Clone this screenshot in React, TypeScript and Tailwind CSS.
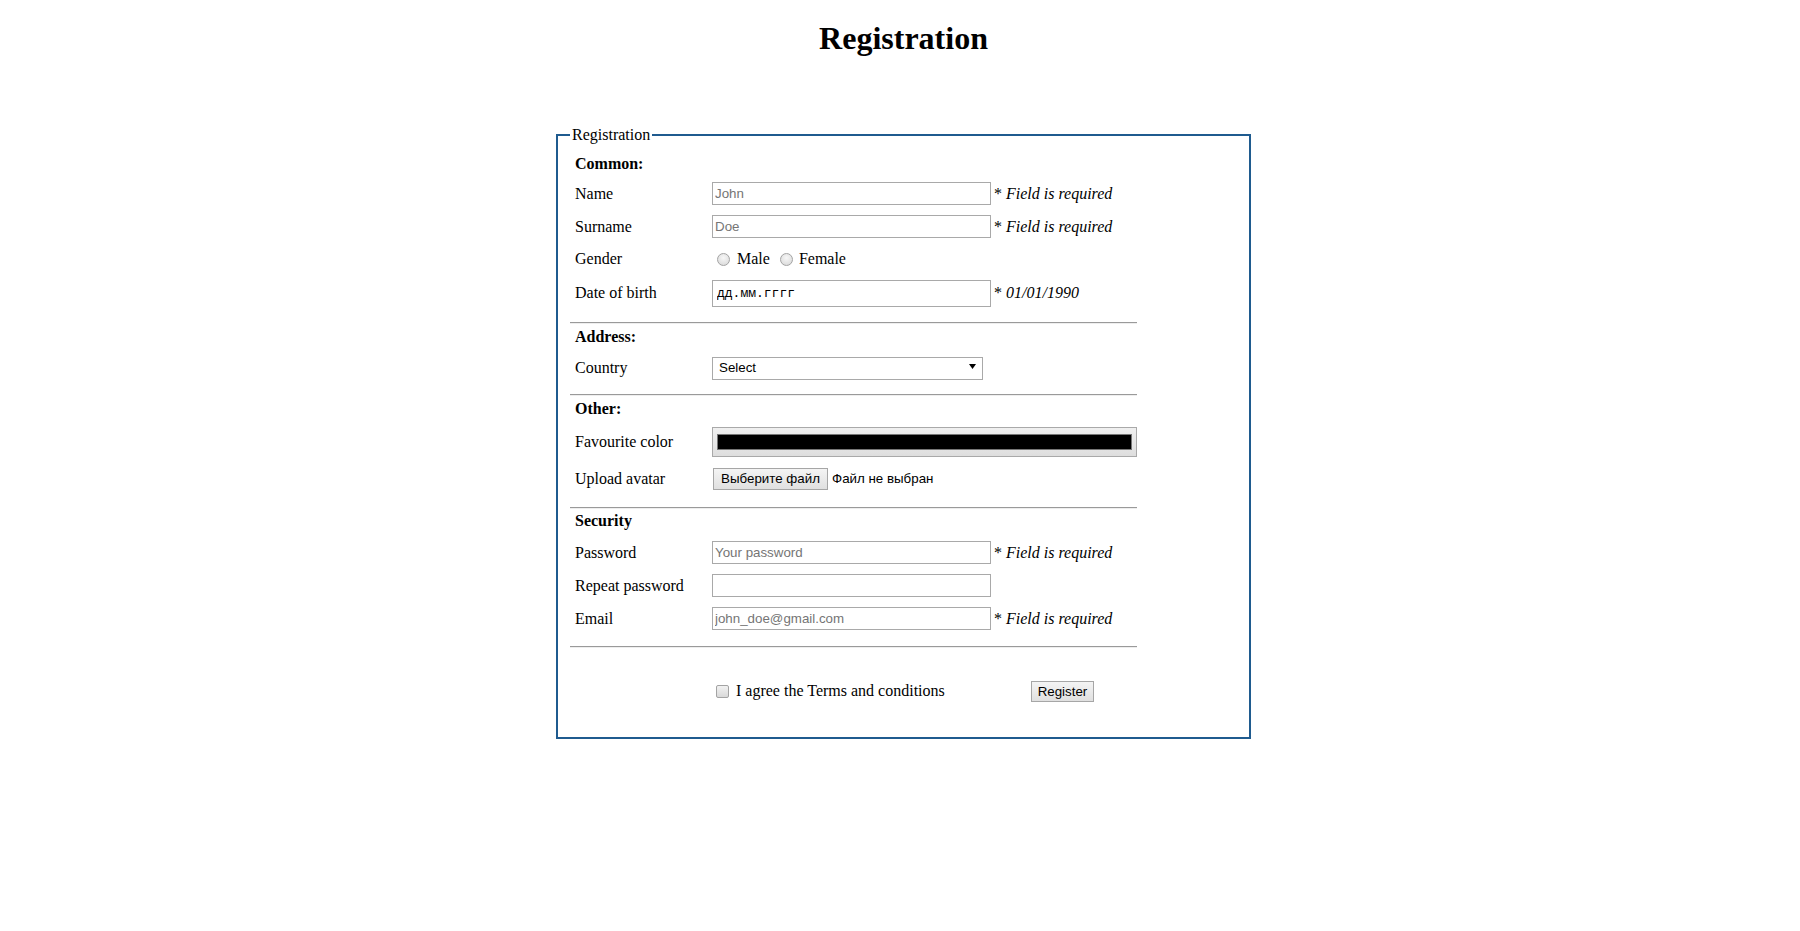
const serif = "font-['Liberation_Serif','Times_New_Roman',serif]";

function Field({ label, className, children }: { label: string; className: string; children?: React.ReactNode }) {
	return (
		<div className={`flex items-center ${className}`}>
			<div className="w-[142px] shrink-0 pl-[5px] leading-[18px]">{label}</div>
			{children}
		</div>
	);
}

function TextInput({ placeholder, type = "text" }: { placeholder?: string; type?: string }) {
	return (
		<input
			type={type}
			placeholder={placeholder}
			className="w-[279px] h-[23px] border border-[#a9a9a9] bg-white px-[2px] text-[13.33px] font-['Liberation_Sans',Arial,sans-serif] text-black placeholder:text-[#757575] outline-none"
		/>
	);
}

function Required({ text = "Field is required" }: { text?: string }) {
	return (
		<span className="ml-[3px] leading-[18px] whitespace-nowrap">
			* <i>{text}</i>
		</span>
	);
}

function Heading({ text, className }: { text: string; className: string }) {
	return <div className={`h-[18px] pl-[5px] leading-[18px] font-bold ${className}`}>{text}</div>;
}

function Rule({ className }: { className: string }) {
	return <hr className={`h-0 border-t border-t-[#9a9a9a] border-b border-b-[#eeeeee] ${className}`} />;
}

export default function App() {
	return (
		<div className={`min-h-[931px] bg-white text-black text-[16px] pl-[7px] ${serif}`}>
			<h1 className="pt-[20px] text-center text-[32px] leading-[37px] font-bold">Registration</h1>
			<div className="flex justify-center mt-[69px]">
				<fieldset className="w-[695px] border-2 border-[#1f5b8f] px-[12px] pb-[34px]">
					<legend className="px-[2px] leading-[18px]">Registration</legend>
					<div className="w-[567px]">
						<Heading text="Common:" className="mt-[11px]" />
						<Field label="Name" className="mt-[4px] h-[33px]">
							<TextInput placeholder="John" />
							<Required />
						</Field>
						<Field label="Surname" className="h-[33px]">
							<TextInput placeholder="Doe" />
							<Required />
						</Field>
						<Field label="Gender" className="h-[32px]">
							<label className="flex items-center leading-[18px]">
								<input
									type="radio"
									name="gender"
									className="appearance-none ml-[5px] mt-[1px] w-[13px] h-[13px] rounded-full border border-[#a3a3a3] bg-[radial-gradient(circle_at_50%_35%,#f7f7f7,#d6d6d6)]"
								/>
								<span className="ml-[7px]">Male</span>
							</label>
							<label className="flex items-center leading-[18px]">
								<input
									type="radio"
									name="gender"
									className="appearance-none ml-[10px] mt-[1px] w-[13px] h-[13px] rounded-full border border-[#a3a3a3] bg-[radial-gradient(circle_at_50%_35%,#f7f7f7,#d6d6d6)]"
								/>
								<span className="ml-[6px]">Female</span>
							</label>
						</Field>
						<Field label="Date of birth" className="h-[36px]">
							<input
								type="text"
								readOnly
								defaultValue="дд.мм.гггг"
								className="w-[279px] h-[27px] border border-[#a9a9a9] bg-white pl-[4px] text-[13px] font-['Liberation_Mono','DejaVu_Sans_Mono',monospace] text-black outline-none"
							/>
							<Required text="01/01/1990" />
						</Field>
						<Rule className="mt-[11px]" />

						<Heading text="Address:" className="mt-[4px]" />
						<Field label="Country" className="mt-[5px] h-[33px]">
							<div className="relative">
								<select className="appearance-none w-[271px] h-[23px] border border-[#a9a9a9] bg-white pl-[6px] text-[13.33px] font-['Liberation_Sans',Arial,sans-serif] text-black outline-none">
									<option>Select</option>
									<option>Ukraine</option>
									<option>Poland</option>
									<option>USA</option>
								</select>
								<svg className="pointer-events-none absolute right-[7px] top-[9px]" width="7" height="5" viewBox="0 0 7 5">
									<polygon points="0,0 7,0 3.5,5" fill="#000" />
								</svg>
							</div>
						</Field>
						<Rule className="mt-[10px]" />

						<Heading text="Other:" className="mt-[4px]" />
						<Field label="Favourite color" className="mt-[6px] h-[36px]">
							<div className="w-[426px] h-[30px] border border-[#a9a9a9] bg-linear-to-b from-[#f0f0f0] to-[#dedede] px-[4px] py-[6px]">
								<div className="h-full border border-[#777777] bg-black" />
							</div>
						</Field>
						<Field label="Upload avatar" className="mt-[2px] h-[33px]">
							<div className="flex items-center font-['Liberation_Sans',Arial,sans-serif] text-[13.33px]">
								<button className="ml-[1px] w-[115px] h-[22px] border border-[#a6a6a6] bg-linear-to-b from-[#f4f4f4] to-[#e0e0e0] text-black">
									Выберите файл
								</button>
								<span className="ml-[4px]">Файл не выбран</span>
							</div>
						</Field>
						<Rule className="mt-[12px]" />

						<Heading text="Security" className="mt-[3px]" />
						<Field label="Password" className="mt-[6px] h-[33px]">
							<TextInput type="password" placeholder="Your password" />
							<Required />
						</Field>
						<Field label="Repeat password" className="h-[33px]">
							<TextInput type="password" />
						</Field>
						<Field label="Email" className="h-[33px]">
							<TextInput type="email" placeholder="john_doe@gmail.com" />
							<Required />
						</Field>
						<Rule className="mt-[11px]" />

						<div className="mt-[31px] h-[24px] flex items-center">
							<div className="w-[142px] shrink-0" />
							<label className="flex items-center w-[319px] leading-[18px]">
								<input
									type="checkbox"
									className="appearance-none ml-[4px] mt-[1px] w-[13px] h-[13px] rounded-[2px] border border-[#a3a3a3] bg-linear-to-b from-[#f2f2f2] to-[#d9d9d9]"
								/>
								<span className="ml-[7px]">I agree the Terms and conditions</span>
							</label>
							<button className="w-[63px] h-[21px] border border-[#a6a6a6] bg-linear-to-b from-[#f4f4f4] to-[#e0e0e0] text-[13.33px] font-['Liberation_Sans',Arial,sans-serif] text-black">
								Register
							</button>
						</div>
					</div>
				</fieldset>
			</div>
		</div>
	);
}
